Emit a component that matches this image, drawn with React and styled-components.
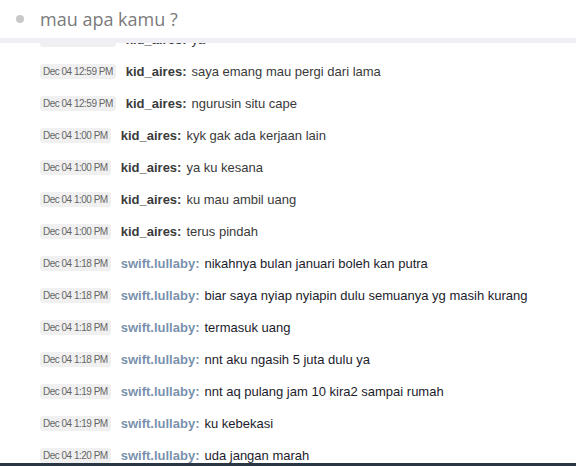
import React from "react";
import styled, { createGlobalStyle } from "styled-components";

const GlobalStyle = createGlobalStyle`
  html, body {
    margin: 0;
    padding: 0;
    background: #fff;
    font-family: "Liberation Sans", Arial, sans-serif;
  }
`;

const messages = [
  { time: "Dec 04 12:59 PM", user: "kid_aires", text: "ya" },
  { time: "Dec 04 12:59 PM", user: "kid_aires", text: "saya emang mau pergi dari lama" },
  { time: "Dec 04 12:59 PM", user: "kid_aires", text: "ngurusin situ cape" },
  { time: "Dec 04 1:00 PM", user: "kid_aires", text: "kyk gak ada kerjaan lain" },
  { time: "Dec 04 1:00 PM", user: "kid_aires", text: "ya ku kesana" },
  { time: "Dec 04 1:00 PM", user: "kid_aires", text: "ku mau ambil uang" },
  { time: "Dec 04 1:00 PM", user: "kid_aires", text: "terus pindah" },
  { time: "Dec 04 1:18 PM", user: "swift.lullaby", text: "nikahnya bulan januari boleh kan putra" },
  { time: "Dec 04 1:18 PM", user: "swift.lullaby", text: "biar saya nyiap nyiapin dulu semuanya yg masih kurang" },
  { time: "Dec 04 1:18 PM", user: "swift.lullaby", text: "termasuk uang" },
  { time: "Dec 04 1:18 PM", user: "swift.lullaby", text: "nnt aku ngasih 5 juta dulu ya" },
  { time: "Dec 04 1:19 PM", user: "swift.lullaby", text: "nnt aq pulang jam 10 kira2 sampai rumah" },
  { time: "Dec 04 1:19 PM", user: "swift.lullaby", text: "ku kebekasi" },
  { time: "Dec 04 1:20 PM", user: "swift.lullaby", text: "uda jangan marah" },
];

const Page = styled.div`
  width: 576px;
  height: 466px;
  display: flex;
  flex-direction: column;
  overflow: hidden;
  background: #fff;
`;

const Header = styled.div`
  height: 38px;
  display: flex;
  align-items: center;
  padding-left: 16px;
  gap: 16px;
  background: #fff;
  border-bottom: 5px solid #f0eff5;
  position: relative;
  z-index: 1;
`;

const Dot = styled.span`
  width: 8px;
  height: 8px;
  border-radius: 50%;
  background: #c8c8c8;
`;

const Title = styled.div`
  font-family: "Open Sans", "Liberation Sans", sans-serif;
  font-size: 18px;
  color: #7a7a7a;
`;

const Log = styled.div`
  flex: 1;
  overflow: hidden;
  border-bottom: 3px solid #2b3644;
`;

const List = styled.div`
  margin-top: -20px;
`;

const Row = styled.div`
  height: 32px;
  display: flex;
  align-items: center;
  padding-left: 40px;
  font-size: 13px;
  white-space: nowrap;
`;

const Stamp = styled.span`
  background: #f0f0f0;
  border-radius: 3px;
  color: #666;
  font-size: 10px;
  letter-spacing: -0.5px;
  padding: 2px 3px;
  margin-right: 10px;
`;

const Name = styled.span`
  font-weight: bold;
  color: ${(p) => (p.$blue ? "#7a92ad" : "#3b3b3b")};
  margin-right: 5px;
`;

const Text = styled.span`
  color: ${(p) => (p.$dark ? "#1c1c2c" : "#3a3a3a")};
`;

export default function App() {
  return (
    <Page>
      <GlobalStyle />
      <Header>
        <Dot />
        <Title>mau apa kamu ?</Title>
      </Header>
      <Log>
        <List>
          {messages.map((m, i) => {
            const blue = m.user === "swift.lullaby";
            return (
              <Row key={i}>
                <Stamp>{m.time}</Stamp>
                <Name $blue={blue}>{m.user}:</Name>
                <Text $dark={blue}>{m.text}</Text>
              </Row>
            );
          })}
        </List>
      </Log>
    </Page>
  );
}
